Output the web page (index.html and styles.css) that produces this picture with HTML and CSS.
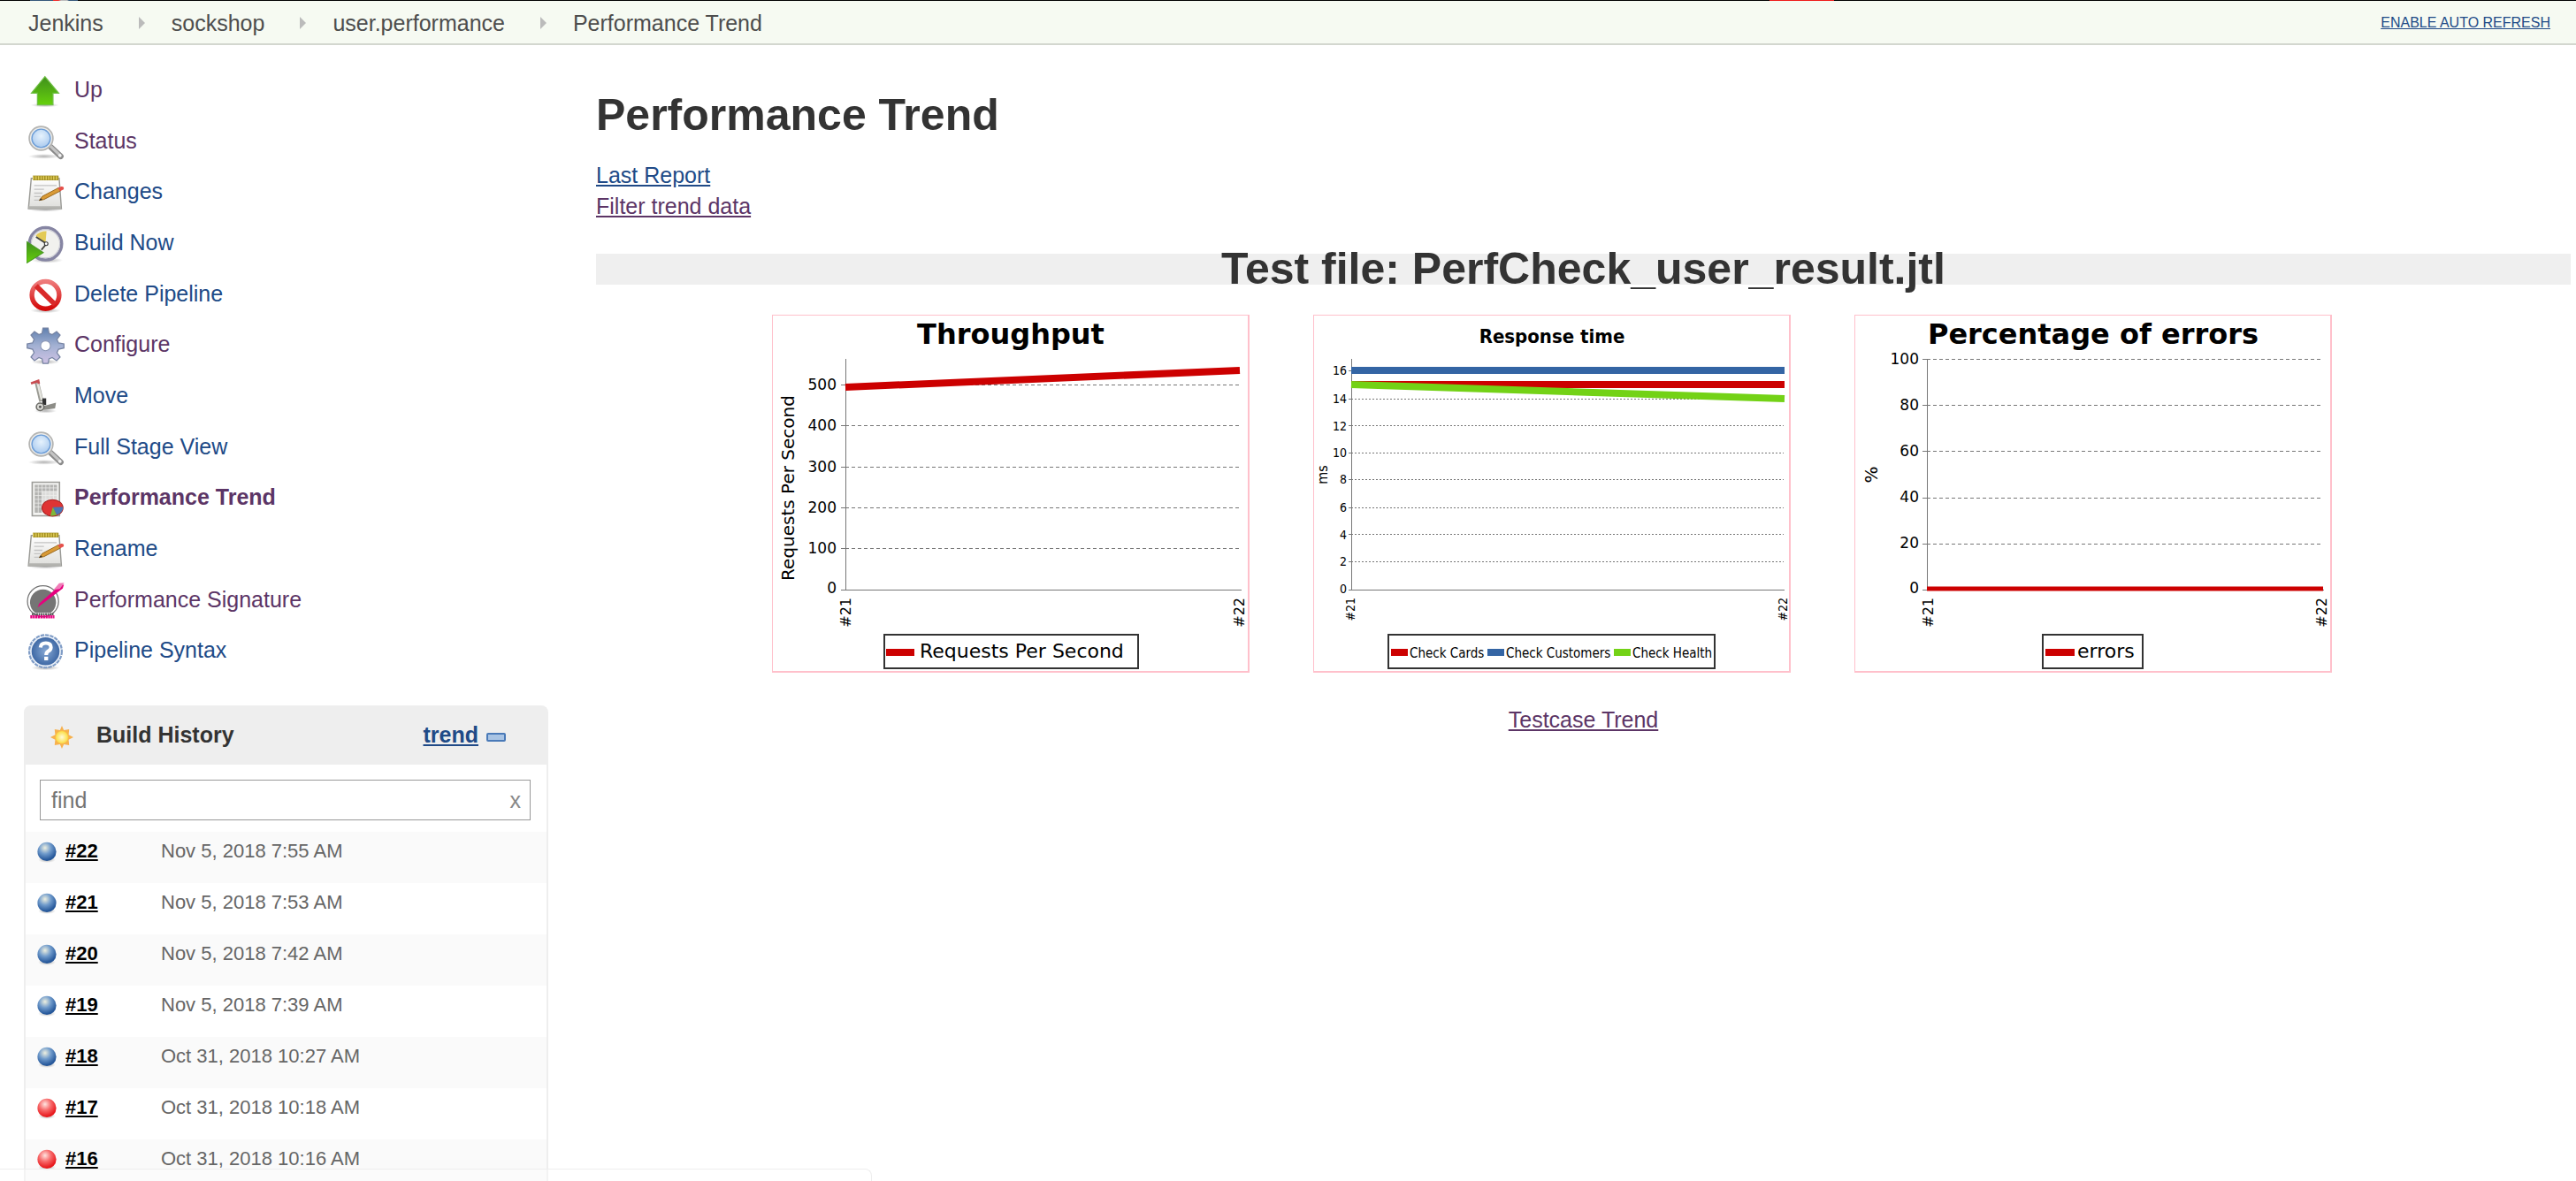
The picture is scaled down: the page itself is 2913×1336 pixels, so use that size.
FILE: index.html
```html
<!DOCTYPE html>
<html lang="en">
<head>
<meta charset="utf-8">
<title>Performance Trend [Jenkins]</title>
<link rel="stylesheet" href="styles.css">
</head>
<body>
<svg class="defs" aria-hidden="true">
  <defs>
    <linearGradient id="green" x1="0" y1="0" x2="0" y2="1"><stop offset="0" stop-color="#3f8f1c"/><stop offset="1" stop-color="#66d00c"/></linearGradient>
    <linearGradient id="redRing" x1="0" y1="0" x2="0" y2="1"><stop offset="0" stop-color="#ee7a7a"/><stop offset="1" stop-color="#d40a0a"/></linearGradient>
    <linearGradient id="gearFill" x1="0" y1="0" x2="0" y2="1"><stop offset="0" stop-color="#5f7fae"/><stop offset=".5" stop-color="#a3b1d3"/><stop offset="1" stop-color="#cfc2e4"/></linearGradient>
    <linearGradient id="paper" x1="0" y1="0" x2="0" y2="1"><stop offset="0" stop-color="#ffffff"/><stop offset="1" stop-color="#dededb"/></linearGradient>
    <radialGradient id="lens" cx=".5" cy=".4" r=".6"><stop offset="0" stop-color="#e6f2fd"/><stop offset="1" stop-color="#9fc3ec"/></radialGradient>
    <radialGradient id="helpFill"><stop offset="0" stop-color="#86a8d4"/><stop offset="1" stop-color="#3f69a5"/></radialGradient>
    <radialGradient id="sunFill"><stop offset="0" stop-color="#fffbd8"/><stop offset="1" stop-color="#fbdc3c"/></radialGradient>
    <radialGradient id="ballBlue" cx=".4" cy=".3" r=".65"><stop offset="0" stop-color="#eef0e0"/><stop offset=".5" stop-color="#6f9acb"/><stop offset="1" stop-color="#25579a"/></radialGradient>
    <radialGradient id="ballRed" cx=".4" cy=".3" r=".65"><stop offset="0" stop-color="#ffe4e0"/><stop offset=".5" stop-color="#f7696a"/><stop offset="1" stop-color="#e81a1e"/></radialGradient>
    <radialGradient id="shade"><stop offset="0" stop-color="#000" stop-opacity=".3"/><stop offset="1" stop-color="#000" stop-opacity="0"/></radialGradient>
  </defs>
  <symbol id="i-up" viewBox="0 0 24 24">
    <ellipse cx="11.6" cy="20.6" rx="9" ry="1.4" fill="url(#shade)"/>
    <path d="M11.6 2.6 20.3 13H16.7V20.4H6.9V13H3.1Z" fill="url(#green)" stroke="#6fbf45" stroke-width=".7"/>
  </symbol>
  <symbol id="i-search" viewBox="0 0 24 24">
    <ellipse cx="11" cy="20.6" rx="10" ry="1.6" fill="url(#shade)"/>
    <path d="M14.6 14 21.6 20.6" stroke="#8b8b8b" stroke-width="3.6" stroke-linecap="round"/>
    <path d="M15 14 21.4 20.2" stroke="#c4c4c4" stroke-width="1.8" stroke-linecap="round"/>
    <circle cx="21" cy="20" r="1" fill="#f3f3f3"/>
    <circle cx="9.2" cy="9.2" r="7.2" fill="url(#lens)" stroke="#b4b4b2" stroke-width="1.5"/>
    <circle cx="9.2" cy="9.2" r="6.5" fill="none" stroke="#ececea" stroke-width="1"/>
    <circle cx="9.2" cy="9.2" r="5.8" fill="none" stroke="#6f9fd8" stroke-width=".8"/>
  </symbol>
  <symbol id="i-notepad" viewBox="0 0 24 24">
    <ellipse cx="12" cy="22.4" rx="11" ry="1.4" fill="url(#shade)"/>
    <path d="M3 2.6H20.6L22 21.8H1.2Z" fill="url(#paper)" stroke="#9a9a96" stroke-width=".8"/>
    <path d="M1.4 20.2H21.8V21.8H1.2Z" fill="#b3b3af"/>
    <path d="M4 2.4H20.2" stroke="#a08c22" stroke-width="3"/>
    <path d="M4 2.4H20.2" stroke="#e0ce5a" stroke-width="2.4" stroke-dasharray=".8 .8"/>
    <path d="M4.8 7.2H19M4.8 9.6H11M4.8 12H10M4.8 14.2H9M4.8 16.4H9" stroke="#c3c3c3" stroke-width=".7"/>
    <path d="M8 16.6 10 14 20.2 8.6 21.4 10.6 11 16Z" fill="#d99a36" stroke="#93621a" stroke-width=".5"/>
    <path d="M19.8 8.8 21.8 7.8Q24 7.6 23.4 9.6L21.2 10.8Z" fill="#e5514b"/>
    <path d="M8 16.6 9 15.2 10 16.2Z" fill="#333"/>
  </symbol>
  <symbol id="i-clock" viewBox="0 0 24 24">
    <ellipse cx="13" cy="22" rx="10" ry="1.8" fill="url(#shade)"/>
    <circle cx="12" cy="11.6" r="10.2" fill="#f1f1ee" stroke="#8685a3" stroke-width="1.9"/>
    <circle cx="12" cy="11.6" r="9" fill="none" stroke="#c9c9d3" stroke-width=".6"/>
    <path d="M12 11.2 5.8 6.4A9 9 0 0 1 12.6 3.6Z" fill="#e3ca55"/>
    <path d="M6 7.2 12.6 11.6 9.4 15.4" fill="none" stroke="#44443e" stroke-width="1"/>
    <circle cx="12.4" cy="11.6" r="1.1" fill="#fff" stroke="#333" stroke-width=".6"/>
    <path d="M0 10.2 10.6 17.2 0 23.8Z" fill="url(#green)" stroke="#4b9a26" stroke-width=".6"/>
  </symbol>
  <symbol id="i-delete" viewBox="0 0 24 24">
    <ellipse cx="12" cy="21.4" rx="9.6" ry="1.6" fill="url(#shade)"/>
    <circle cx="12" cy="11.6" r="8.6" fill="#fff" stroke="url(#redRing)" stroke-width="3"/>
    <path d="M6 5.8 18 17.6" stroke="#d92a2a" stroke-width="3.2"/>
  </symbol>
  <symbol id="i-gear" viewBox="0 0 24 24">
    <ellipse cx="12" cy="22" rx="9" ry="1.6" fill="url(#shade)"/>
    <path d="M10.4.6H13.6L14.2 4 16.2 4.8 19 2.8 21.2 5 19.2 7.8 20.2 10 23.6 10.6V13.2L20.2 14 19.2 16.2 21.2 19 19 21.2 16.2 19.2 14.2 20 13.6 23H10.4L9.8 20 7.8 19.2 5 21.2 2.8 19 4.8 16.2 3.8 14 .4 13.2V10.6L3.8 10 4.8 7.8 2.8 5 5 2.8 7.8 4.8 9.8 4Z" fill="url(#gearFill)" stroke="#7784a3" stroke-width=".7"/>
    <circle cx="12" cy="11.8" r="3.1" fill="#fff" stroke="#8c97b5" stroke-width=".6"/>
  </symbol>
  <symbol id="i-move" viewBox="0 0 24 24">
    <ellipse cx="12" cy="20.6" rx="7" ry="1.4" fill="url(#shade)"/>
    <path d="M6.4 2 9.4 14.6" stroke="#9b9b94" stroke-width="2.8"/>
    <path d="M7 3 9.6 13.6" stroke="#e6e6e0" stroke-width="1.4"/>
    <path d="M2.8 3.2 7.4 1.6 7.8 3.4" fill="none" stroke="#c84b50" stroke-width="1.5"/>
    <path d="M10.4 17.6 18.6 15.4 18 19 11 20Z" fill="#8d8d87"/>
    <path d="M10 12.6H12.4V16.8H10Z" fill="#333"/>
    <circle cx="8.6" cy="18" r="2.4" fill="#d9d9d4" stroke="#6d6d68" stroke-width=".9"/>
    <circle cx="8.6" cy="18" r=".8" fill="#555"/>
  </symbol>
  <symbol id="i-report" viewBox="0 0 24 24">
    <path d="M3.6 1.4H20.8V22.6H3.6Z" fill="#f4f4f2" stroke="#9c9c98" stroke-width=".9"/>
    <path d="M5.2 3H19.2V20.6H5.2Z" fill="#dcdcda"/>
    <path d="M5.2 3H9.6V20.6H5.2ZM5.2 3H19.2V7H5.2Z" fill="#b3b3b1"/>
    <path d="M5.2 5H19.2M5.2 7.4H19.2M5.2 9.8H19.2M5.2 12.2H19.2M5.2 14.6H19.2M5.2 17H19.2M7.4 3V20.6M9.8 3V20.6M12.2 3V20.6M14.6 3V20.6M17 3V20.6" stroke="#f1f1ef" stroke-width=".4"/>
    <ellipse cx="16.4" cy="17.6" rx="6.6" ry="5.2" fill="#df3434" stroke="#a81e1e" stroke-width=".6"/>
    <path d="M16.6 17.2 23 17A6.6 5.2 0 0 1 19 22Z" fill="#4a76b5"/>
    <path d="M16.6 17.2 19 22.2A7 5 0 0 1 15 22.6Z" fill="#7cb83a"/>
  </symbol>
  <symbol id="i-signature" viewBox="0 0 24 24">
    <circle cx="10.4" cy="11.8" r="9.8" fill="#fff" stroke="#757575" stroke-width=".7"/>
    <path d="M5.4 19A8.2 8.2 0 1 1 15.4 19Z" fill="#757575"/>
    <path d="M3.4 20H17" stroke="#565656" stroke-width="1.4" stroke-dasharray="1 .4"/>
    <path d="M2.4 21.6H17.6" stroke="#e6007e" stroke-width="1.9" stroke-dasharray="1.3 .3"/>
    <path d="M7 15.8 8 13.2 21.6 1.2 23.6 1.4 22.8 3.8Z" fill="#e6007e"/>
    <path d="M17 4.6 20.6.4 23.8.2 21 4Z" fill="#f07db8"/>
  </symbol>
  <symbol id="i-help" viewBox="0 0 24 24">
    <ellipse cx="12" cy="22" rx="9" ry="1.6" fill="url(#shade)"/>
    <circle cx="12" cy="11.6" r="10.3" fill="#eaf0f8" stroke="#7f9cc6" stroke-width="1.2" stroke-dasharray="2.4 .6"/>
    <circle cx="12" cy="11.6" r="8.8" fill="url(#helpFill)"/>
    <path d="M8.8 9.2Q9 6.4 12.2 6.4 15.4 6.4 15.4 9 15.4 10.6 13.6 11.6 12.4 12.4 12.4 14" fill="none" stroke="#fff" stroke-width="2.3"/>
    <rect x="11.2" y="15" width="2.4" height="2.3" fill="#fff"/>
  </symbol>
  <symbol id="i-blue" viewBox="0 0 24 24"><ellipse cx="12" cy="20.6" rx="10" ry="3.4" fill="url(#shade)"/><circle cx="12" cy="11.4" r="10.6" fill="url(#ballBlue)"/></symbol>
  <symbol id="i-red" viewBox="0 0 24 24"><ellipse cx="12" cy="20.6" rx="10" ry="3.4" fill="url(#shade)"/><circle cx="12" cy="11.4" r="10.6" fill="url(#ballRed)"/></symbol>
</svg>

<header class="top-bar">
  <nav class="crumbs" aria-label="Breadcrumb">
    <a href="#">Jenkins</a>
    <svg class="sep" viewBox="0 0 7 14" aria-hidden="true"><path d="M0 0 7 7 0 14Z"/></svg>
    <a href="#">sockshop</a>
    <svg class="sep" viewBox="0 0 7 14" aria-hidden="true"><path d="M0 0 7 7 0 14Z"/></svg>
    <a href="#">user.performance</a>
    <svg class="sep" viewBox="0 0 7 14" aria-hidden="true"><path d="M0 0 7 7 0 14Z"/></svg>
    <a href="#">Performance Trend</a>
  </nav>
  <a class="refresh" href="#">ENABLE AUTO REFRESH</a>
</header>

<div class="page">
  <aside class="side">
    <nav class="tasks" aria-label="Tasks">
      <a class="visited" href="#"><svg><use href="#i-up"/></svg>Up</a>
      <a class="visited" href="#"><svg><use href="#i-search"/></svg>Status</a>
      <a href="#"><svg><use href="#i-notepad"/></svg>Changes</a>
      <a href="#"><svg><use href="#i-clock"/></svg>Build Now</a>
      <a href="#"><svg><use href="#i-delete"/></svg>Delete Pipeline</a>
      <a class="visited" href="#"><svg><use href="#i-gear"/></svg>Configure</a>
      <a href="#"><svg><use href="#i-move"/></svg>Move</a>
      <a href="#"><svg><use href="#i-search"/></svg>Full Stage View</a>
      <a class="visited current" href="#"><svg><use href="#i-report"/></svg>Performance Trend</a>
      <a href="#"><svg><use href="#i-notepad"/></svg>Rename</a>
      <a class="visited" href="#"><svg><use href="#i-signature"/></svg>Performance Signature</a>
      <a href="#"><svg><use href="#i-help"/></svg>Pipeline Syntax</a>
    </nav>

    <section class="history">
      <div class="history-head">
        <svg class="sun" viewBox="0 0 24 24" aria-hidden="true">
          <path d="M12 0 14 4.6 19.6 3.6 19 9.4 24 12 19 14.6 19.6 20.4 14 19.4 12 24 10 19.4 4.4 20.4 5 14.6 0 12 5 9.4 4.4 3.6 10 4.6Z" fill="#f7b14c"/>
          <circle cx="12" cy="12" r="6.8" fill="url(#sunFill)" stroke="#f8b750" stroke-width=".6"/>
        </svg>
        <h2>Build History</h2>
        <a class="trend" href="#">trend</a>
        <button class="collapse" type="button" aria-label="Collapse"></button>
      </div>
      <div class="find">
        <input type="text" placeholder="find" aria-label="find">
        <button type="button" aria-label="Clear">x</button>
      </div>
      <table class="builds">
        <tbody>
          <tr><td><svg><use href="#i-blue"/></svg></td><td><a href="#">#22</a></td><td>Nov 5, 2018 7:55 AM</td></tr>
          <tr><td><svg><use href="#i-blue"/></svg></td><td><a href="#">#21</a></td><td>Nov 5, 2018 7:53 AM</td></tr>
          <tr><td><svg><use href="#i-blue"/></svg></td><td><a href="#">#20</a></td><td>Nov 5, 2018 7:42 AM</td></tr>
          <tr><td><svg><use href="#i-blue"/></svg></td><td><a href="#">#19</a></td><td>Nov 5, 2018 7:39 AM</td></tr>
          <tr><td><svg><use href="#i-blue"/></svg></td><td><a href="#">#18</a></td><td>Oct 31, 2018 10:27 AM</td></tr>
          <tr><td><svg><use href="#i-red"/></svg></td><td><a href="#">#17</a></td><td>Oct 31, 2018 10:18 AM</td></tr>
          <tr><td><svg><use href="#i-red"/></svg></td><td><a href="#">#16</a></td><td>Oct 31, 2018 10:16 AM</td></tr>
        </tbody>
      </table>
    </section>
  </aside>

  <main class="main">
    <h1>Performance Trend</h1>
    <p class="links"><a href="#">Last Report</a><a class="visited" href="#">Filter trend data</a></p>
    <h1 class="band">Test file: PerfCheck_user_result.jtl</h1>
    <div class="charts">
      <svg class="chart" viewBox="0 0 537 402" role="img" aria-label="Throughput">
        <text class="title" x="269" y="32">Throughput</text>
        <path class="grid" d="M82 78H529M82 124H529M82 171H529M82 217H529M82 263H529M82 310H529"/>
        <path class="axis" d="M82 49V310H530M77 78H82M77 124H82M77 171H82M77 217H82M77 263H82M77 310H82"/>
        <g class="ylab"><text x="72" y="84">500</text><text x="72" y="130">400</text><text x="72" y="177">300</text><text x="72" y="223">200</text><text x="72" y="269">100</text><text x="72" y="314">0</text></g>
        <text class="name" transform="translate(24 195) rotate(-90)">Requests Per Second</text>
        <text class="xlab" transform="translate(88 319) rotate(-90)">#21</text>
        <text class="xlab" transform="translate(533 319) rotate(-90)">#22</text>
        <path class="series red" d="M82 81 528 62"/>
        <rect class="box" x="126" y="361" width="287" height="38"/>
        <path class="series red" d="M128 381H160"/>
        <text class="key" x="166" y="387">Requests Per Second</text>
      </svg>
      <svg class="chart narrow" viewBox="0 0 537 402" role="img" aria-label="Response time">
        <text class="title" x="269" y="31">Response time</text>
        <path class="grid" d="M42 94H531M42 124H531M42 155H531M42 185H531M42 217H531M42 247H531M42 278H531M42 310H531"/>
        <path class="axis" d="M42 49V310H532M39 62H42M39 94H42M39 124H42M39 155H42M39 185H42M39 217H42M39 247H42M39 278H42M39 310H42"/>
        <g class="ylab"><text x="37" y="67">16</text><text x="37" y="99">14</text><text x="37" y="130">12</text><text x="37" y="160">10</text><text x="37" y="190">8</text><text x="37" y="222">6</text><text x="37" y="253">4</text><text x="37" y="283">2</text><text x="37" y="314">0</text></g>
        <text class="name" transform="translate(15 180) rotate(-90)">ms</text>
        <text class="xlab" transform="translate(46 319) rotate(-90)">#21</text>
        <text class="xlab" transform="translate(535 319) rotate(-90)">#22</text>
        <path class="series red" d="M42 78H532"/>
        <path class="series blue" d="M42 62H532"/>
        <path class="series green" d="M42 78 532 94"/>
        <rect class="box" x="84" y="361" width="369" height="38"/>
        <path class="series red" d="M87 381H106"/>
        <text class="key" x="108" y="387">Check Cards</text>
        <path class="series blue" d="M196 381H215"/>
        <text class="key" x="217" y="387">Check Customers</text>
        <path class="series green" d="M339 381H358"/>
        <text class="key" x="360" y="387">Check Health</text>
      </svg>
      <svg class="chart" viewBox="0 0 537 402" role="img" aria-label="Percentage of errors">
        <text class="title" x="269" y="32">Percentage of errors</text>
        <path class="grid" d="M81 49H529M81 101H529M81 153H529M81 206H529M81 258H529"/>
        <path class="axis" d="M81 49V310H530M76 49H81M76 101H81M76 153H81M76 206H81M76 258H81M76 310H81"/>
        <g class="ylab"><text x="72" y="55">100</text><text x="72" y="107">80</text><text x="72" y="159">60</text><text x="72" y="211">40</text><text x="72" y="263">20</text><text x="72" y="314">0</text></g>
        <text class="name" transform="translate(25 180) rotate(-90)">%</text>
        <text class="xlab" transform="translate(88 319) rotate(-90)">#21</text>
        <text class="xlab" transform="translate(533 319) rotate(-90)">#22</text>
        <path class="series red thin" d="M81 309H529"/>
        <rect class="box" x="212" y="361" width="113" height="38"/>
        <path class="series red" d="M215 381H248"/>
        <text class="key" x="251" y="387">errors</text>
      </svg>
    </div>
    <p class="more"><a class="visited" href="#">Testcase Trend</a></p>
  </main>
</div>
<div class="status-bubble" aria-hidden="true"></div>
</body>
</html>
```
FILE: styles.css
```css
* { box-sizing: border-box; }

body {
  margin: 0;
  height: 100vh;
  overflow: hidden;
  background: #fff;
  color: #333;
  font: 25px/35px "Liberation Sans", Arial, sans-serif;
}

a { color: #204a87; }
a.visited { color: #5c3566; }
.defs { position: absolute; width: 0; height: 0; }

.top-bar {
  display: flex;
  align-items: center;
  justify-content: space-between;
  height: 51px;
  padding: 3px 29px 0 32px;
  border-bottom: 2px solid #d3d7cf;
  background:
    linear-gradient(90deg, transparent 34px, #34577a 34px 60px, #ef2929 60px 66px, #bbb 69px 76px, #34577a 78px 88px, transparent 88px) 0 0 / 100% 1px no-repeat,
    linear-gradient(90deg, #000 68.7%, #ef1a1a 68.7% 71.2%, #000 71.2%) 0 0 / 100% 1px no-repeat,
    #f6faf2;
}
.crumbs { display: flex; align-items: center; }
.crumbs a { color: #4d4d4d; text-decoration: none; }
.sep { width: 7px; height: 14px; margin: 0 30px 0 40px; fill: #bbb; }
.refresh { font-size: 16px; line-height: 20px; }

.page { display: flex; gap: 54px; padding: 21px 6px 0 27px; }
.side { flex: 0 0 593px; }

.tasks a {
  display: flex;
  align-items: center;
  gap: 11px;
  height: 58px;
  padding-left: 3px;
  text-decoration: none;
}
.tasks a:nth-child(3n) { height: 57px; }
.tasks .current { font-weight: bold; }
.tasks svg { width: 43px; height: 43px; margin-top: 4px; }

.history {
  margin-top: 34px;
  border: 2px solid #eee;
  border-radius: 8px 8px 0 0;
}
.history-head {
  display: flex;
  align-items: center;
  height: 65px;
  padding: 0 46px 2px 28px;
  background: #eee;
}
.history-head h2 { flex: 1; margin: 0 0 0 26px; font-size: 25px; }
.sun { width: 26px; height: 26px; margin-top: 4px; }
.trend { font-weight: bold; }
.collapse {
  width: 22px;
  height: 10px;
  margin: 4px 0 0 9px;
  padding: 0;
  border: 2px solid #4a7ab8;
  border-radius: 2px;
  background: #a9c4e4;
}

.find {
  display: flex;
  height: 46px;
  margin: 17px 18px 13px 16px;
  border: 1px solid #999;
}
.find input {
  flex: 1;
  min-width: 0;
  padding: 0 12px;
  border: 0;
  outline: 0;
  background: none;
  font: inherit;
}
.find input::placeholder { color: #757575; }
.find button {
  padding: 0 10px 0 0;
  border: 0;
  background: none;
  color: #888;
  font: inherit;
}

.builds { width: 100%; border-collapse: collapse; font-size: 22px; }
.builds tr { height: 58px; }
.builds tr:nth-child(odd) { background: #fafafa; }
.builds td { padding: 4px 0 0; vertical-align: top; color: #666; }
.builds td:nth-child(1) { width: 45px; padding-left: 12px; }
.builds td:nth-child(2) { width: 108px; }
.builds svg { display: block; width: 24px; height: 24px; margin-top: 7px; }
.builds a { color: #000; font-weight: bold; }

.main { flex: 1; min-width: 0; }
.main h1 { margin: 29px 0 22px; font-size: 50px; line-height: 58px; }
.links { display: flex; flex-direction: column; align-items: flex-start; margin: 0; }
.main .band {
  margin: 36px 0 34px;
  background: #efefef;
  line-height: 35px;
  text-align: center;
}
.charts { display: flex; justify-content: center; }
.chart {
  width: 540px;
  height: 405px;
  margin-right: 72px;
  border: 1px solid #ffc0cb;
  border-width: 1px 2px 2px 1px;
  font-family: "DejaVu Sans", sans-serif;
}
.chart text { fill: #000; }
.chart .title { font-size: 32px; font-weight: bold; text-anchor: middle; }
.ylab { font-size: 17px; text-anchor: end; }
.name { font-size: 20px; text-anchor: middle; }
.xlab { font-size: 16px; text-anchor: end; }
.key { font-size: 22px; }
.narrow { font-family: "DejaVu Sans Condensed", "DejaVu Sans", sans-serif; }
.chart.narrow .title { font-size: 22px; }
.narrow .ylab { font-size: 14px; }
.narrow .name { font-size: 16px; }
.narrow .xlab { font-size: 14px; }
.narrow .key { font-size: 15px; }
.axis { fill: none; stroke: #777; stroke-width: 1; shape-rendering: crispEdges; }
.grid { stroke: #777; stroke-width: 1; stroke-dasharray: 4 3; shape-rendering: crispEdges; }
.narrow .grid { stroke-dasharray: 2 2; }
.series { fill: none; stroke-width: 8; }
.thin { stroke-width: 5; }
.red { stroke: #c00; }
.blue { stroke: #3465a4; }
.green { stroke: #73d216; }
.box { fill: #fff; stroke: #333; stroke-width: 2; shape-rendering: crispEdges; }

.more { margin: 36px 0 0; text-align: center; }

.status-bubble {
  position: fixed;
  bottom: 0;
  left: 0;
  width: 986px;
  height: 14px;
  border: 1px solid #eee;
  border-width: 1px 1px 0 0;
  border-radius: 0 8px 0 0;
  background: rgba(255, 255, 255, .3);
}
```
